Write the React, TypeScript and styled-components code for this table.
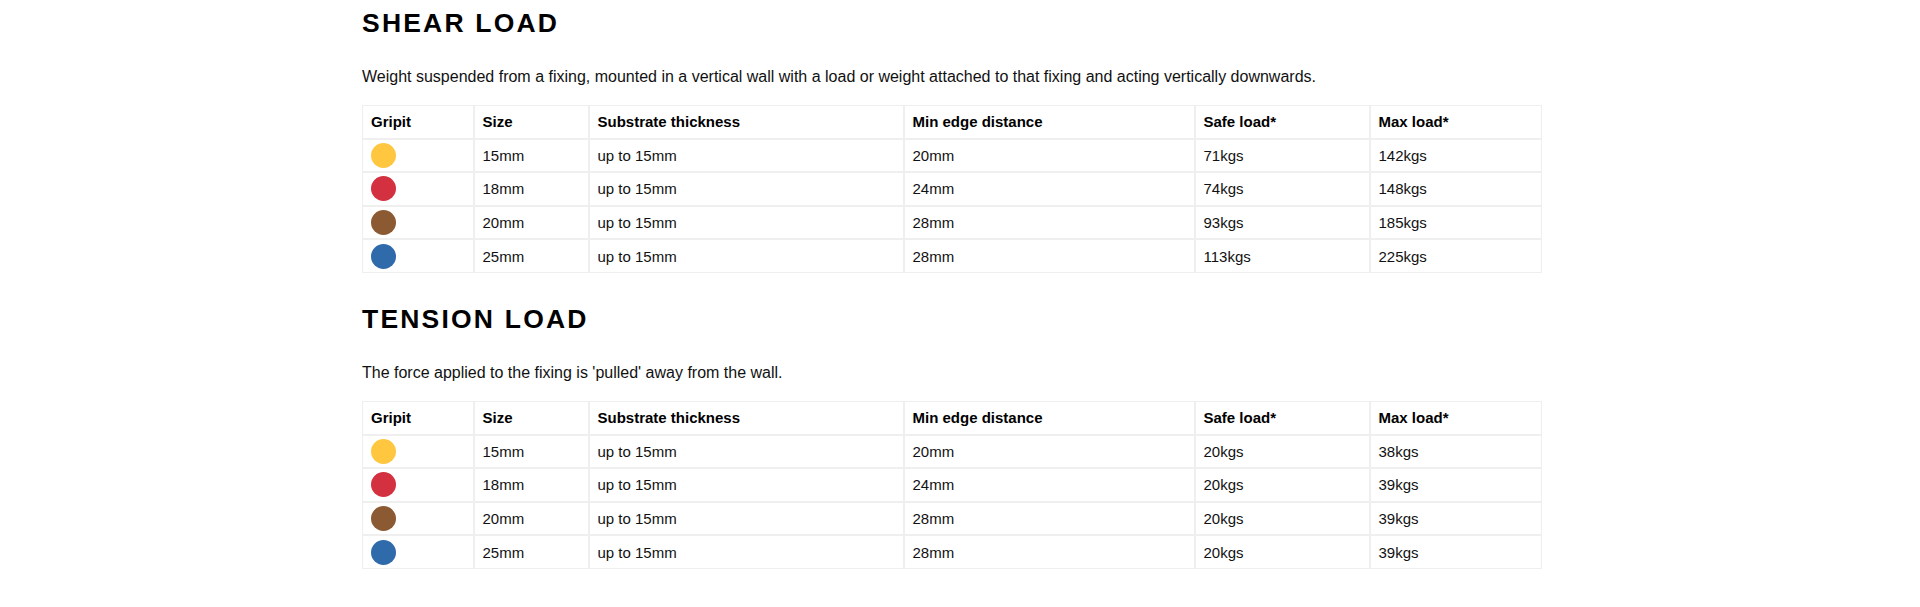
import styled, { createGlobalStyle } from 'styled-components';

const GlobalStyle = createGlobalStyle`
  html, body {
    margin: 0;
    padding: 0;
    background: #fff;
  }
  body {
    font-family: "Liberation Sans", Arial, sans-serif;
    color: #111;
  }
`;

const Page = styled.main`
  width: 1196px;
  margin: 0 auto;
  padding-top: 8px;
`;

const Section = styled.section`
  & + & {
    margin-top: 31px;
  }
`;

const Heading = styled.h2`
  margin: 0 0 29px;
  font-size: 26.5px;
  font-weight: 700;
  letter-spacing: 2.2px;
  text-transform: uppercase;
  color: #000;
`;

const Intro = styled.p`
  margin: 0 0 19px;
  font-size: 16px;
  line-height: normal;
`;

const Table = styled.table`
  width: 1180px;
  table-layout: fixed;
  border-collapse: separate;
  border-spacing: 0;
  font-size: 15px;
`;

const Cell = styled.td`
  height: 33.6px;
  padding: 0 8px;
  border: 1px solid #efefef;
  vertical-align: middle;
  text-align: left;
  box-sizing: border-box;
`;

const HeadCell = styled(Cell).attrs({ as: 'th' })`
  font-weight: 700;
  color: #000;
`;

const Dot = styled.span<{ $color: string }>`
  display: block;
  width: 25px;
  height: 25px;
  border-radius: 50%;
  background: ${(p) => p.$color};
`;

const columns = [
  { label: 'Gripit', width: 111.5 },
  { label: 'Size', width: 115 },
  { label: 'Substrate thickness', width: 315 },
  { label: 'Min edge distance', width: 291 },
  { label: 'Safe load*', width: 175 },
  { label: 'Max load*', width: 172.5 },
];

const gripits = [
  { color: '#ffc640', size: '15mm', edge: '20mm' },
  { color: '#d33040', size: '18mm', edge: '24mm' },
  { color: '#8b5a33', size: '20mm', edge: '28mm' },
  { color: '#2f6aab', size: '25mm', edge: '28mm' },
];

const sections = [
  {
    title: 'Shear load',
    text: 'Weight suspended from a fixing, mounted in a vertical wall with a load or weight attached to that fixing and acting vertically downwards.',
    loads: [
      ['71kgs', '142kgs'],
      ['74kgs', '148kgs'],
      ['93kgs', '185kgs'],
      ['113kgs', '225kgs'],
    ],
  },
  {
    title: 'Tension load',
    text: "The force applied to the fixing is 'pulled' away from the wall.",
    loads: [
      ['20kgs', '38kgs'],
      ['20kgs', '39kgs'],
      ['20kgs', '39kgs'],
      ['20kgs', '39kgs'],
    ],
  },
];

function LoadTable({ loads }: { loads: string[][] }) {
  return (
    <Table>
      <colgroup>
        {columns.map((c) => (
          <col key={c.label} style={{ width: c.width }} />
        ))}
      </colgroup>
      <thead>
        <tr>
          {columns.map((c) => (
            <HeadCell key={c.label}>{c.label}</HeadCell>
          ))}
        </tr>
      </thead>
      <tbody>
        {gripits.map((g, i) => (
          <tr key={g.size}>
            <Cell>
              <Dot $color={g.color} />
            </Cell>
            <Cell>{g.size}</Cell>
            <Cell>up to 15mm</Cell>
            <Cell>{g.edge}</Cell>
            <Cell>{loads[i][0]}</Cell>
            <Cell>{loads[i][1]}</Cell>
          </tr>
        ))}
      </tbody>
    </Table>
  );
}

export default function App() {
  return (
    <>
      <GlobalStyle />
      <Page>
        {sections.map((s) => (
          <Section key={s.title}>
            <Heading>{s.title}</Heading>
            <Intro>{s.text}</Intro>
            <LoadTable loads={s.loads} />
          </Section>
        ))}
      </Page>
    </>
  );
}
